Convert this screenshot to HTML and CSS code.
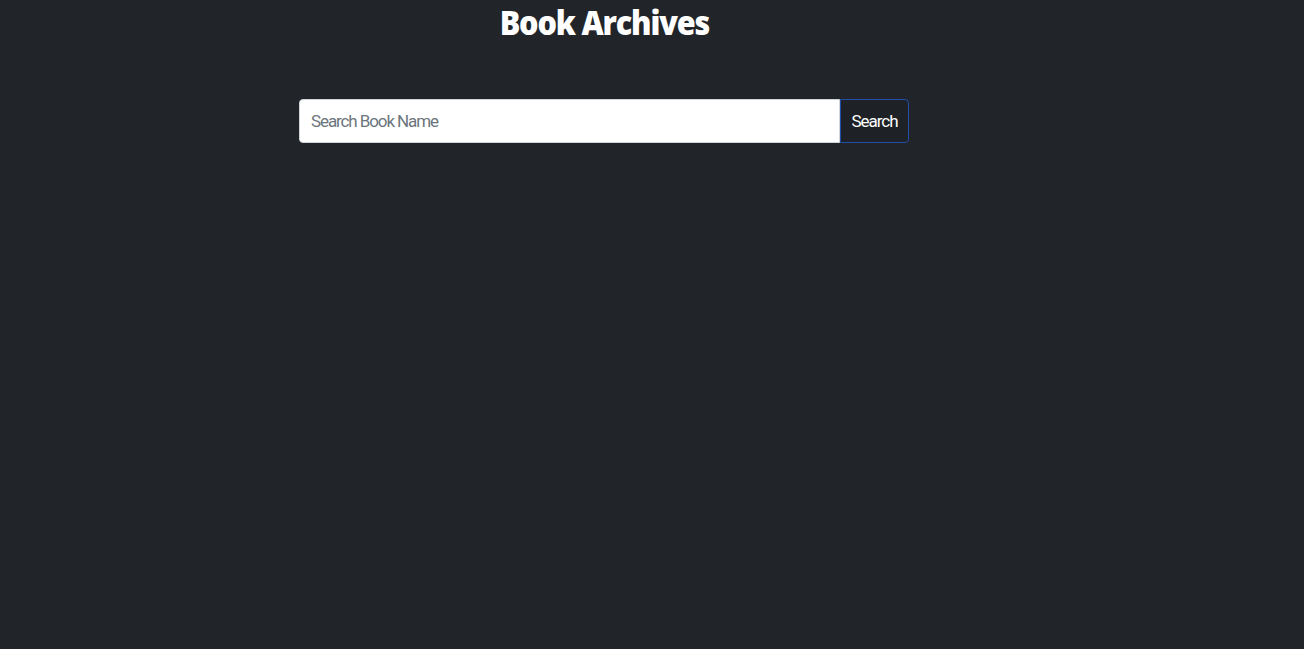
FILE: index.html
```html
<!DOCTYPE html>
<html>
<head>
<meta charset="utf-8">
<link rel="stylesheet" href="styles.css">
</head>
<body>
<main class="page">
  <h1 class="title">Book Archives</h1>
  <form class="search">
    <input class="search-input" type="text" placeholder="Search Book Name">
    <button class="search-btn" type="button"><span class="btn-label">Search</span></button>
  </form>
</main>
</body>
</html>
```

FILE: styles.css
```css
html, body {
  margin: 0;
  padding: 0;
  background: #212529;
  height: 100%;
}
.page {
  width: 1208px;
  display: flex;
  flex-direction: column;
  align-items: center;
}
.title {
  margin: 0;
  color: #fff;
  font-family: "Open Sans", sans-serif;
  font-weight: 800;
  font-size: 34px;
  line-height: 44px;
  letter-spacing: -1.3px;
  transform: scaleX(0.9);
}
.search {
  margin-top: 55px;
  display: flex;
  width: 610px;
}
.search-input {
  flex: 1;
  height: 44px;
  box-sizing: border-box;
  border: 1px solid #ced4da;
  border-radius: 4px 0 0 4px;
  padding: 0 11px;
  font-family: Roboto, sans-serif;
  font-size: 17px;
  letter-spacing: -1.1px;
  color: #212529;
  background: #fff;
  outline: none;
}
.search-input::placeholder {
  color: #6c757d;
}
.search-btn {
  height: 44px;
  width: 69px;
  box-sizing: border-box;
  border: 1px solid #1f4fa8;
  border-radius: 0 4px 4px 0;
  background: #1e2125;
  color: #fff;
  font-family: Roboto, sans-serif;
  font-size: 17px;
  letter-spacing: -1px;
  padding: 0;
}
```
